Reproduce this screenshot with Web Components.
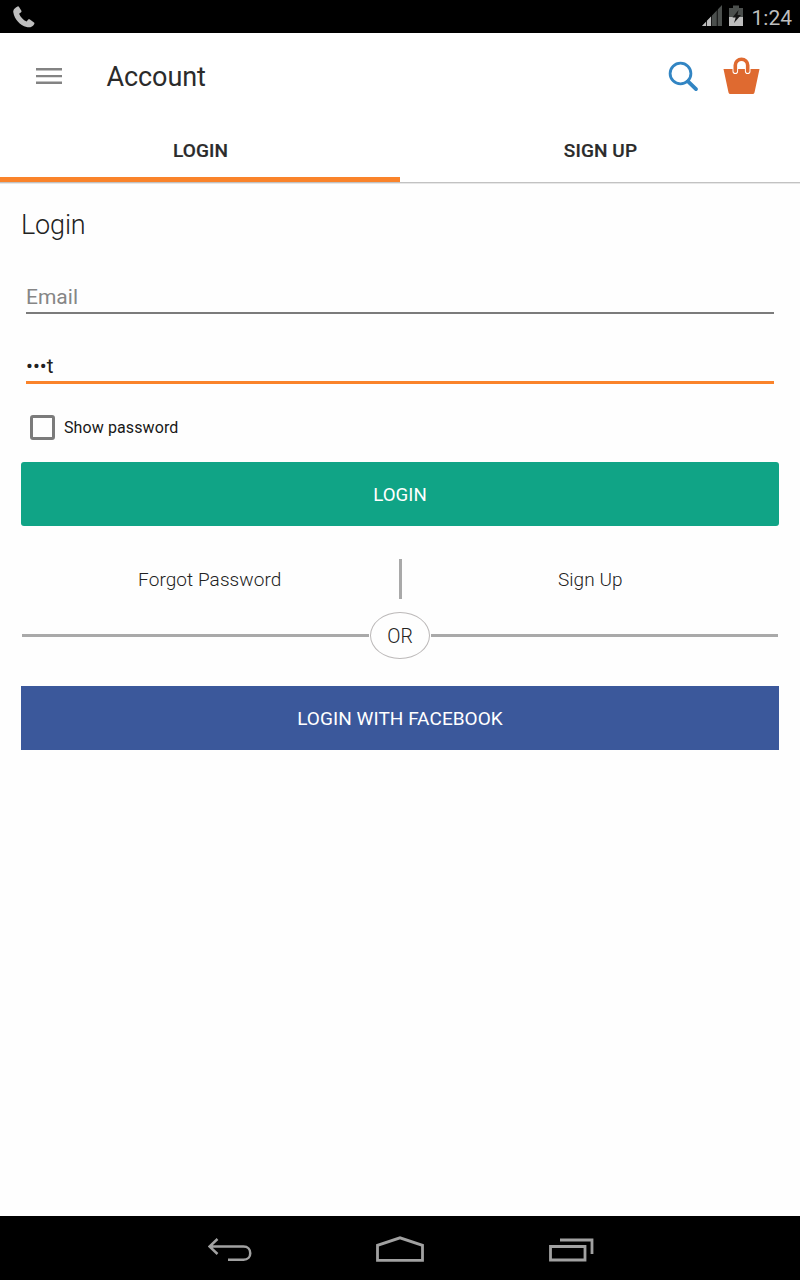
<!DOCTYPE html>
<html lang="en">
<head>
<meta charset="utf-8">
<title>Account</title>
<style>
html,body{margin:0;height:100%;background:#fefefe}
body{font-family:Roboto,"Noto Sans",sans-serif;color:#212121}
</style>
</head>
<body>
<account-screen></account-screen>
<script>
const define = (name, html) => customElements.define(name, class extends HTMLElement {
  constructor() {
    super();
    const t = document.createElement('template');
    t.innerHTML = html;
    this.attachShadow({mode: 'open'}).append(t.content.cloneNode(true));
  }
});

define('status-bar', `
<style>
:host{display:flex;height:33px;background:#000;color:#bebebe;align-items:center;justify-content:space-between}
svg{display:block}
.right{display:flex;align-items:center;padding-right:8px}
.time{font-size:21px;line-height:33px;width:41px;display:flex;justify-content:flex-end;margin-left:7px;padding-top:3px;white-space:nowrap}
</style>
<svg width="40" height="33" viewBox="0 0 40 33"><path fill="#bebebe" d="M17.600 6.400c.5-.3 1-.1 1.300.4l2.500 4c.3.6.2 1-.3 1.400l-2 1.500c1.500 3.400 4 6.200 7.500 7.900l1.600-2c.4-.5.900-.6 1.400-.3l4.400 3.300c.5.400.6.800.3 1.300-1.500 2.600-4.100 4.100-7.700 3.200C20 25.400 14.300 19 13.300 12.300c-.4-2.900 1.900-4.700 4.300-5.900z"/></svg>
<div class="right">
<svg width="43" height="33" viewBox="701 0 43 33"><path fill="#4b4f4d" d="M722 5v21h-20z"/><path fill="#bebebe" d="M711.500 16V26H702z"/><path fill="#000" d="M706 5h.8v21h-.8zM711.200 5h.8v21h-.8zM716.800 5h.8v21h-.8z"/><path fill="#4b4f4d" d="M733 5.500h6V8h4v9h-14V8h4z"/><path fill="#bebebe" d="M729 17h14v9h-14z"/><path fill="#151515" d="M738.500 10l-6 7.500h3.200l-1.700 5.500 7-8h-3.500z"/></svg>
<div class="time">1:24</div>
</div>`);

define('app-bar', `
<style>
:host{display:flex;height:86px;align-items:center;background:#fff;padding:0 40px 0 36px;color:#2b2b2b}
h1{flex:1;margin:0 0 0 44.500px;font-size:27px;font-weight:400;line-height:36px;padding-top:2px;letter-spacing:-.1px}
svg{display:block}
.bag{margin-left:24px}
</style>
<svg width="26" height="18" viewBox="36 67 26 18" fill="#838383"><path d="M36 68h26v2.600H36zM36 75h26v2.200H36zM36 81.500h26v2.500H36z"/></svg>
<h1><slot></slot></h1>
<svg width="31" height="38" viewBox="668 57 31 38" fill="none" stroke="#3285c3"><circle cx="680.500" cy="73.500" r="10.400" stroke-width="2.800"/><path d="M688 81.300l8 7.800" stroke-width="3.800" stroke-linecap="round"/></svg>
<svg class="bag" width="37" height="38" viewBox="723 57 37 38"><path fill="#df6a30" d="M723.500 69h36l-5 23.500q-.3 1.500-2 1.500h-22q-1.700 0-2-1.500z"/><path d="M735.300 71.300V65.200a6.200 6 0 0 1 12.400 0v6.100" fill="none" stroke="#fff" stroke-width="5.600" stroke-linecap="round"/><path d="M735.300 71.200v-6a6.200 6 0 0 1 12.400 0v6" fill="none" stroke="#df6a30" stroke-width="3.600" stroke-linecap="round"/></svg>`);

define('tab-item', `
<style>
:host{flex:1;display:flex;box-sizing:border-box;height:63px;padding:1px 0 0 1px;justify-content:center;border-bottom:5px solid transparent;font-size:19px;font-weight:500;line-height:62px;color:#2b2b2b;letter-spacing:.1px;-webkit-text-stroke:.2px #2b2b2b}
:host([selected]){border-color:#fa832a}
</style><slot></slot>`);

define('tab-strip', `
<style>:host{display:flex;background:#fff;border-bottom:1px solid #c2c2c2;box-shadow:0 1px #e7e7e7}</style><slot></slot>`);

define('text-field', `
<style>
:host{display:flex;box-sizing:border-box;height:36px;margin:0 5px;border-bottom:2px solid #7b7b7b;font-size:21px;line-height:38px;color:#868686}
:host([focused]){border-bottom:3px solid #fa832a;color:#212121;font-size:20.500px;line-height:36px}
</style><slot></slot>`);

define('check-box', `
<style>
:host{display:flex;align-items:center;height:26px;padding-left:9px;gap:9px;font-size:16px;color:#181818;letter-spacing:.1px}
.box{box-sizing:border-box;width:25px;height:25px;border:3px solid #7b7b7b;border-radius:3px}
</style><span class="box"></span><span><slot></slot></span>`);

define('action-button', `
<style>
:host{display:flex;height:64px;justify-content:center;border-radius:3px;background:#10a486;color:#fff;font-size:18.700px;line-height:66px}
:host([facebook]){background:#3b589b;border-radius:0;font-size:19px;letter-spacing:.05px}
</style><slot></slot>`);

define('link-row', `
<style>
:host{display:flex;height:40px;align-items:center;font-size:19px;font-weight:300;color:#222;line-height:40px;letter-spacing:.08px}
::slotted(span){flex:1;text-align:center;padding-top:2px}
i{width:3px;height:40px;background:#a9a9a9}
</style><slot name="left"></slot><i></i><slot name="right"></slot>`);

define('or-divider', `
<style>
:host{display:flex;align-items:center;gap:1px;height:47px;padding:0 1px;font-size:19.500px;font-weight:300;color:#222}
i{flex:1;height:3px;background:#a9a9a9}
b{box-sizing:border-box;width:60px;height:47px;border:1px solid #bcb9b9;border-radius:50%;text-align:center;font-weight:300;line-height:48px}
</style><i></i><b><slot></slot></b><i></i>`);

define('login-form', `
<style>
:host{display:flex;flex-direction:column;padding:23px 21px 0}
h2{margin:0;font-size:27px;font-weight:300;line-height:38px;height:38px;color:#222;letter-spacing:-.15px}
text-field{margin-top:34px}
.pw{margin-top:34px}
check-box{margin-top:30px}
.login{margin-top:22px}
link-row{margin-top:33px}
or-divider{margin-top:13px}
.fb{margin-top:27px}
</style>
<h2>Login</h2>
<text-field>Email</text-field>
<text-field class="pw" focused>•••t</text-field>
<check-box>Show password</check-box>
<action-button class="login">LOGIN</action-button>
<link-row><span slot="left">Forgot Password</span><span slot="right">Sign Up</span></link-row>
<or-divider>OR</or-divider>
<action-button class="fb" facebook>LOGIN WITH FACEBOOK</action-button>`);

define('nav-bar', `
<style>
:host{display:flex;height:64px;background:#000;justify-content:center;align-items:center;gap:124px;padding-left:2px}
svg{display:block;fill:none;stroke:#a1a1a1;stroke-width:2.500}
</style>
<svg width="44" height="64" viewBox="208 1216 44 64"><path d="M217.500 1239l-8 7.500 8 7.500M210 1246.500h33.500c9 0 9 13.300 0 13.300H228"/></svg>
<svg width="48" height="64" viewBox="376 1216 48 64"><path stroke-width="2.800" d="M377.500 1260.300v-15l22.500-7.500 22.500 7.500v15z"/></svg>
<svg width="46" height="64" viewBox="548 1216 46 64"><path stroke-width="2.800" d="M550.500 1246.500h34.500v13.500h-34.500zM560 1240h32v14"/></svg>`);

define('account-screen', `
<style>
:host{display:flex;flex-direction:column;height:1280px;overflow:hidden}
login-form{flex:1}
</style>
<status-bar></status-bar>
<app-bar>Account</app-bar>
<tab-strip><tab-item selected>LOGIN</tab-item><tab-item>SIGN UP</tab-item></tab-strip>
<login-form></login-form>
<nav-bar></nav-bar>`);
</script>
</body>
</html>
